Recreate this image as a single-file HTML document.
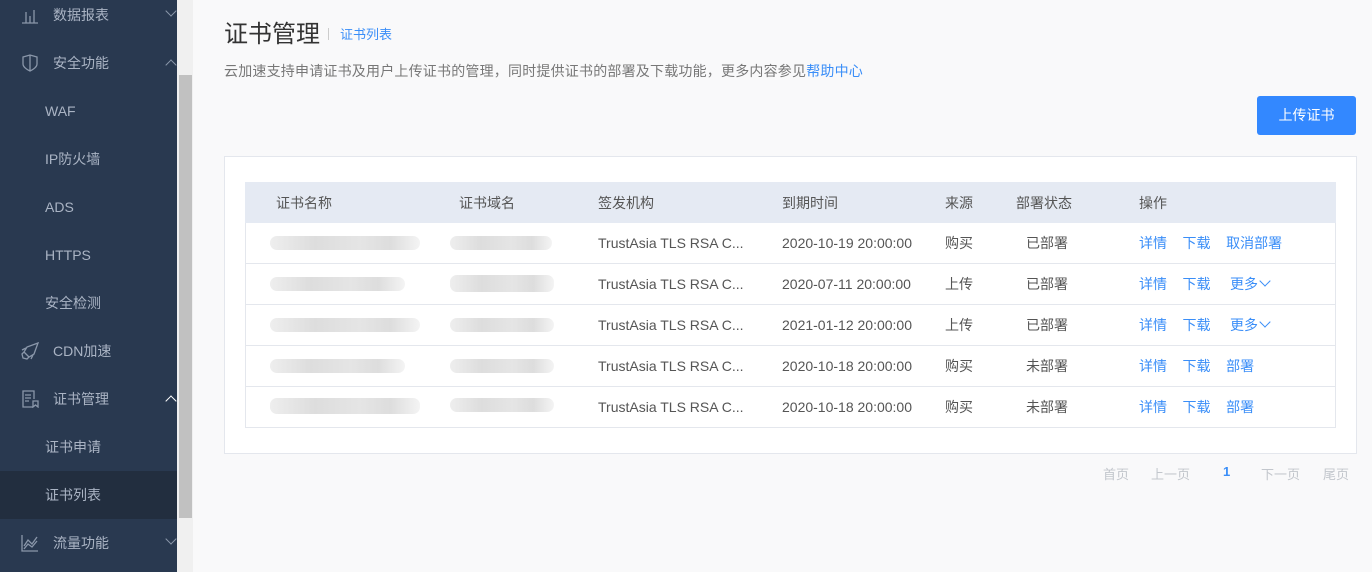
<!DOCTYPE html>
<html><head><meta charset="utf-8"><style>
*{margin:0;padding:0;box-sizing:border-box}
body{width:1372px;height:572px;overflow:hidden;background:#f9f9fa;font-family:"Liberation Sans","Noto Sans CJK SC",sans-serif;position:relative;color:#333}
.a{position:absolute;white-space:nowrap}
#side{position:absolute;left:0;top:0;width:177px;height:572px;background:#293950}
.it{position:absolute;left:0;width:177px;height:48px;line-height:48px;color:#aab4c4;font-size:14px}
.it .t{position:absolute;left:53px}
.it .s{position:absolute;left:45px}
.chev{position:absolute;left:167px;top:18px;width:8px;height:8px;border-right:1.3px solid #8a97aa;border-bottom:1.3px solid #8a97aa}
.dn{transform:rotate(45deg);top:16px}
.up{transform:rotate(-135deg);top:22px}
#sb{position:absolute;left:177px;top:0;width:16px;height:572px;background:#f0f0f0}
#th{position:absolute;left:179px;top:75px;width:13px;height:443px;background:#c1c1c1}
.panel{position:absolute;left:224px;top:156px;width:1133px;height:298px;background:#fff;border:1px solid #e4e7ed}
.tbl{position:absolute;left:245px;top:182px;width:1091px;height:246px;border:1px solid #e4e7ed;border-top:none}
.hd{position:absolute;left:245px;top:182px;width:1091px;height:41px;background:#e5eaf3}
.c{position:absolute;font-size:14px;color:#555;white-space:nowrap;line-height:20px}
.rl{position:absolute;left:246px;width:1089px;height:1px;background:#e4e7ed}
.bl{color:#3a8ef8}
.blur{position:absolute;height:14px;border-radius:7px;background:linear-gradient(90deg,#eee,#ddd 30%,#e5e5e5 60%,#ddd 80%,#f4f4f4)}
.pg{position:absolute;top:464px;font-size:13px;color:#c2c6cc}
.mv{display:inline-block;width:8px;height:8px;border-right:1.3px solid #3a8ef8;border-bottom:1.3px solid #3a8ef8;transform:rotate(45deg);margin-left:3px;position:relative;top:-4px}
</style></head><body>
<div id="side">
 <div class="it" style="top:-9px"><svg class="a" style="left:21px;top:17px" width="18" height="16" viewBox="0 0 18 16" fill="none" stroke="#8a97aa" stroke-width="1.3"><path d="M1 15H17M5 4V15M9 8V15M13 2V15"/></svg><span class="t">数据报表</span><i class="chev dn"></i></div>
 <div class="it" style="top:39px"><svg class="a" style="left:22px;top:15px" width="16" height="18" viewBox="0 0 16 18" fill="none" stroke="#8a97aa" stroke-width="1.3"><path d="M1 3L8 1L15 3V10C15 14 8 17 8 17C8 17 1 14 1 10Z M8 1V17"/></svg><span class="t">安全功能</span><i class="chev up"></i></div>
 <div class="it" style="top:87px"><span class="s">WAF</span></div>
 <div class="it" style="top:135px"><span class="s">IP防火墙</span></div>
 <div class="it" style="top:183px"><span class="s">ADS</span></div>
 <div class="it" style="top:231px"><span class="s">HTTPS</span></div>
 <div class="it" style="top:279px"><span class="s">安全检测</span></div>
 <div class="it" style="top:327px"><svg class="a" style="left:21px;top:15px" width="18" height="18" viewBox="0 0 18 18" fill="none" stroke="#8a97aa" stroke-width="1.3"><path d="M17 1L6 5L3 10L8 15L13 12Z M3 10L1 12L2 16L6 17L8 15 M1 8L5 6 M10 17L12 13"/></svg><span class="t">CDN加速</span></div>
 <div class="it" style="top:375px"><svg class="a" style="left:22px;top:15px" width="17" height="18" viewBox="0 0 17 18" fill="none" stroke="#8a97aa" stroke-width="1.3"><path d="M11 17H1V1H12V9 M3 5H9M3 8H9M3 11H7 M11 11H16V17L13.5 15L11 17Z"/></svg><span class="t">证书管理</span><i class="chev up" style="border-color:#fff"></i></div>
 <div class="it" style="top:423px"><span class="s">证书申请</span></div>
 <div class="it" style="top:471px;background:#222e3f"><span class="s">证书列表</span></div>
 <div class="it" style="top:519px"><svg class="a" style="left:21px;top:15px" width="18" height="18" viewBox="0 0 18 18" fill="none" stroke="#8a97aa" stroke-width="1.3"><path d="M1 1V17H17 M3 12L7 6L11 10L16 3 M3 15L7 10L11 13L16 7"/></svg><span class="t">流量功能</span><i class="chev dn"></i></div>
</div>
<div id="sb"></div><div id="th"></div>

<div class="a" style="left:224px;top:14px;font-size:24px;color:#333">证书管理</div>
<div class="a" style="left:328px;top:28px;width:1px;height:12px;background:#ccc"></div>
<div class="a bl" style="left:340px;top:24px;font-size:13px">证书列表</div>
<div class="a" style="left:224px;top:61px;font-size:14px;color:#777;letter-spacing:0.2px">云加速支持申请证书及用户上传证书的管理，同时提供证书的部署及下载功能，更多内容参见<span class="bl">帮助中心</span></div>
<div class="a" style="left:1257px;top:96px;width:99px;height:39px;background:#3388ff;border-radius:3px;color:#fff;font-size:14px;line-height:39px;text-align:center">上传证书</div>

<div class="panel"></div>
<div class="tbl"></div>
<div class="hd"></div>
<div class="c" style="left:276px;top:193px">证书名称</div>
<div class="c" style="left:459px;top:193px">证书域名</div>
<div class="c" style="left:598px;top:193px">签发机构</div>
<div class="c" style="left:782px;top:193px">到期时间</div>
<div class="c" style="left:945px;top:193px">来源</div>
<div class="c" style="left:1016px;top:193px">部署状态</div>
<div class="c" style="left:1139px;top:193px">操作</div>

<div class="rl" style="top:263px"></div><div class="rl" style="top:304px"></div><div class="rl" style="top:345px"></div><div class="rl" style="top:386px"></div>

<div class="blur" style="left:270px;top:236px;width:150px"></div><div class="blur" style="left:450px;top:236px;width:102px"></div>
<div class="blur" style="left:270px;top:277px;width:135px"></div><div class="blur" style="left:450px;top:275px;width:104px;height:17px"></div>
<div class="blur" style="left:270px;top:318px;width:150px"></div><div class="blur" style="left:450px;top:318px;width:104px"></div>
<div class="blur" style="left:270px;top:359px;width:135px"></div><div class="blur" style="left:450px;top:359px;width:104px"></div>
<div class="blur" style="left:270px;top:398px;width:150px;height:16px"></div><div class="blur" style="left:450px;top:398px;width:104px"></div>

<div class="c" style="left:598px;top:233px">TrustAsia TLS RSA C...</div><div class="c" style="left:782px;top:233px">2020-10-19 20:00:00</div><div class="c" style="left:945px;top:233px">购买</div><div class="c" style="left:1026px;top:233px">已部署</div><div class="c bl" style="left:1139px;top:233px">详情&nbsp;&nbsp;&nbsp;&nbsp;下载&nbsp;&nbsp;&nbsp;&nbsp;取消部署</div>
<div class="c" style="left:598px;top:274px">TrustAsia TLS RSA C...</div><div class="c" style="left:782px;top:274px">2020-07-11 20:00:00</div><div class="c" style="left:945px;top:274px">上传</div><div class="c" style="left:1026px;top:274px">已部署</div><div class="c bl" style="left:1139px;top:274px">详情&nbsp;&nbsp;&nbsp;&nbsp;下载&nbsp;&nbsp;&nbsp;&nbsp;&nbsp;更多<i class="mv"></i></div>
<div class="c" style="left:598px;top:315px">TrustAsia TLS RSA C...</div><div class="c" style="left:782px;top:315px">2021-01-12 20:00:00</div><div class="c" style="left:945px;top:315px">上传</div><div class="c" style="left:1026px;top:315px">已部署</div><div class="c bl" style="left:1139px;top:315px">详情&nbsp;&nbsp;&nbsp;&nbsp;下载&nbsp;&nbsp;&nbsp;&nbsp;&nbsp;更多<i class="mv"></i></div>
<div class="c" style="left:598px;top:356px">TrustAsia TLS RSA C...</div><div class="c" style="left:782px;top:356px">2020-10-18 20:00:00</div><div class="c" style="left:945px;top:356px">购买</div><div class="c" style="left:1026px;top:356px">未部署</div><div class="c bl" style="left:1139px;top:356px">详情&nbsp;&nbsp;&nbsp;&nbsp;下载&nbsp;&nbsp;&nbsp;&nbsp;部署</div>
<div class="c" style="left:598px;top:397px">TrustAsia TLS RSA C...</div><div class="c" style="left:782px;top:397px">2020-10-18 20:00:00</div><div class="c" style="left:945px;top:397px">购买</div><div class="c" style="left:1026px;top:397px">未部署</div><div class="c bl" style="left:1139px;top:397px">详情&nbsp;&nbsp;&nbsp;&nbsp;下载&nbsp;&nbsp;&nbsp;&nbsp;部署</div>

<div class="pg" style="left:1103px">首页</div>
<div class="pg" style="left:1151px">上一页</div>
<div class="pg" style="left:1223px;color:#3a8ef8;font-weight:bold">1</div>
<div class="pg" style="left:1261px">下一页</div>
<div class="pg" style="left:1323px">尾页</div>
</body></html>
